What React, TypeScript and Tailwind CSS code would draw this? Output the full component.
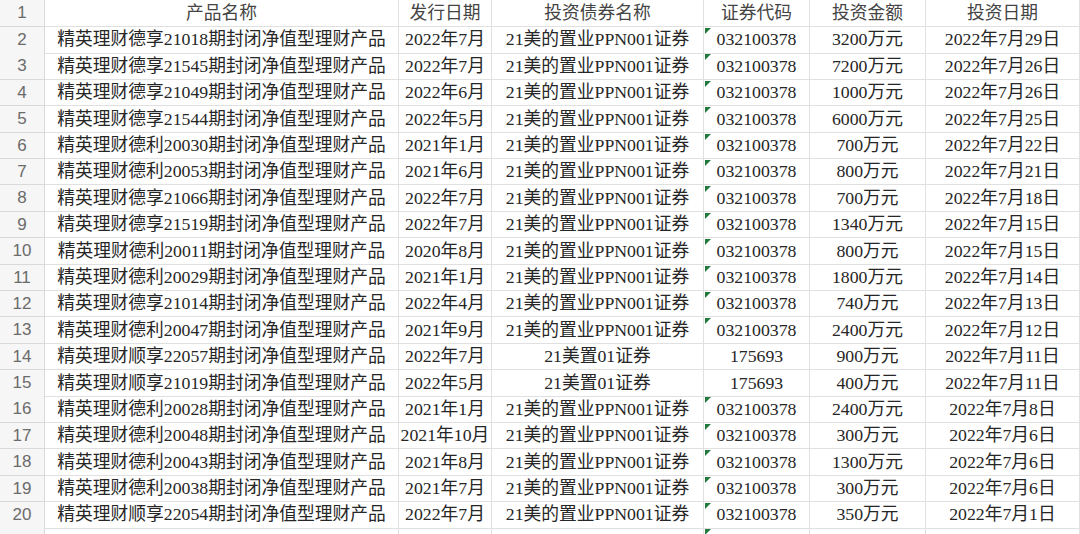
import React from "react";

type Row = {
  name: string;
  issue: string;
  bond: string;
  code: string;
  amount: string;
  date: string;
};

const PPN = "21美的置业PPN001证券";
const MZ = "21美置01证券";

const rows: Row[] = [
  { name: "精英理财德享21018期封闭净值型理财产品", issue: "2022年7月", bond: PPN, code: "032100378", amount: "3200万元", date: "2022年7月29日" },
  { name: "精英理财德享21545期封闭净值型理财产品", issue: "2022年7月", bond: PPN, code: "032100378", amount: "7200万元", date: "2022年7月26日" },
  { name: "精英理财德享21049期封闭净值型理财产品", issue: "2022年6月", bond: PPN, code: "032100378", amount: "1000万元", date: "2022年7月26日" },
  { name: "精英理财德享21544期封闭净值型理财产品", issue: "2022年5月", bond: PPN, code: "032100378", amount: "6000万元", date: "2022年7月25日" },
  { name: "精英理财德利20030期封闭净值型理财产品", issue: "2021年1月", bond: PPN, code: "032100378", amount: "700万元", date: "2022年7月22日" },
  { name: "精英理财德利20053期封闭净值型理财产品", issue: "2021年6月", bond: PPN, code: "032100378", amount: "800万元", date: "2022年7月21日" },
  { name: "精英理财德享21066期封闭净值型理财产品", issue: "2022年7月", bond: PPN, code: "032100378", amount: "700万元", date: "2022年7月18日" },
  { name: "精英理财德享21519期封闭净值型理财产品", issue: "2022年7月", bond: PPN, code: "032100378", amount: "1340万元", date: "2022年7月15日" },
  { name: "精英理财德利20011期封闭净值型理财产品", issue: "2020年8月", bond: PPN, code: "032100378", amount: "800万元", date: "2022年7月15日" },
  { name: "精英理财德利20029期封闭净值型理财产品", issue: "2021年1月", bond: PPN, code: "032100378", amount: "1800万元", date: "2022年7月14日" },
  { name: "精英理财德享21014期封闭净值型理财产品", issue: "2022年4月", bond: PPN, code: "032100378", amount: "740万元", date: "2022年7月13日" },
  { name: "精英理财德利20047期封闭净值型理财产品", issue: "2021年9月", bond: PPN, code: "032100378", amount: "2400万元", date: "2022年7月12日" },
  { name: "精英理财顺享22057期封闭净值型理财产品", issue: "2022年7月", bond: MZ, code: "175693", amount: "900万元", date: "2022年7月11日" },
  { name: "精英理财顺享21019期封闭净值型理财产品", issue: "2022年5月", bond: MZ, code: "175693", amount: "400万元", date: "2022年7月11日" },
  { name: "精英理财德利20028期封闭净值型理财产品", issue: "2021年1月", bond: PPN, code: "032100378", amount: "2400万元", date: "2022年7月8日" },
  { name: "精英理财德利20048期封闭净值型理财产品", issue: "2021年10月", bond: PPN, code: "032100378", amount: "300万元", date: "2022年7月6日" },
  { name: "精英理财德利20043期封闭净值型理财产品", issue: "2021年8月", bond: PPN, code: "032100378", amount: "1300万元", date: "2022年7月6日" },
  { name: "精英理财德利20038期封闭净值型理财产品", issue: "2021年7月", bond: PPN, code: "032100378", amount: "300万元", date: "2022年7月6日" },
  { name: "精英理财顺享22054期封闭净值型理财产品", issue: "2022年7月", bond: PPN, code: "032100378", amount: "350万元", date: "2022年7月1日" },
];

const headers = ["产品名称", "发行日期", "投资债券名称", "证券代码", "投资金额", "投资日期"];

const GRID = "grid grid-cols-[45px_354px_93px_212px_106px_116px_1fr]";

const Flag = () => (
  <svg className="absolute left-[1px] top-[1px]" width="6" height="6" viewBox="0 0 6 6">
    <polygon points="0,0 6,0 0,6" fill="#217a3c" />
  </svg>
);

const Num = ({ n }: { n?: number }) => (
  <div className="flex items-center justify-center bg-[#f6f6f6] border-r border-b border-[#d9d9d9] text-[17px] text-[#6b6b6b] font-[family-name:'Liberation_Sans',sans-serif]">
    {n}
  </div>
);

const Cell = ({ children, flag }: { children?: React.ReactNode; flag?: boolean }) => (
  <div className="relative flex items-center justify-center whitespace-nowrap border-r border-b border-[#e0e0e0] overflow-hidden">
    {flag && <Flag />}
    {children}
  </div>
);

export default function App() {
  return (
    <div className="w-[1080px] h-[534px] overflow-hidden bg-white text-[#262626] text-[17.75px] font-[family-name:'Liberation_Serif','Noto_Sans_CJK_SC',serif]">
      <div className={`${GRID} h-[27px] text-[#444444]`}>
        <Num n={1} />
        {headers.map((h) => (
          <Cell key={h}>{h}</Cell>
        ))}
      </div>
      {rows.map((r, i) => {
        const flag = r.code === "032100378";
        return (
          <div key={i} className={`${GRID} h-[26.4px]`}>
            <Num n={i + 2} />
            <Cell>{r.name}</Cell>
            <Cell>{r.issue}</Cell>
            <Cell>{r.bond}</Cell>
            <Cell flag={flag}>{r.code}</Cell>
            <Cell>{r.amount}</Cell>
            <Cell>{r.date}</Cell>
          </div>
        );
      })}
      <div className={`${GRID} h-[26.4px]`}>
        <Num />
        <Cell />
        <Cell />
        <Cell />
        <Cell flag />
        <Cell />
        <Cell />
      </div>
    </div>
  );
}
